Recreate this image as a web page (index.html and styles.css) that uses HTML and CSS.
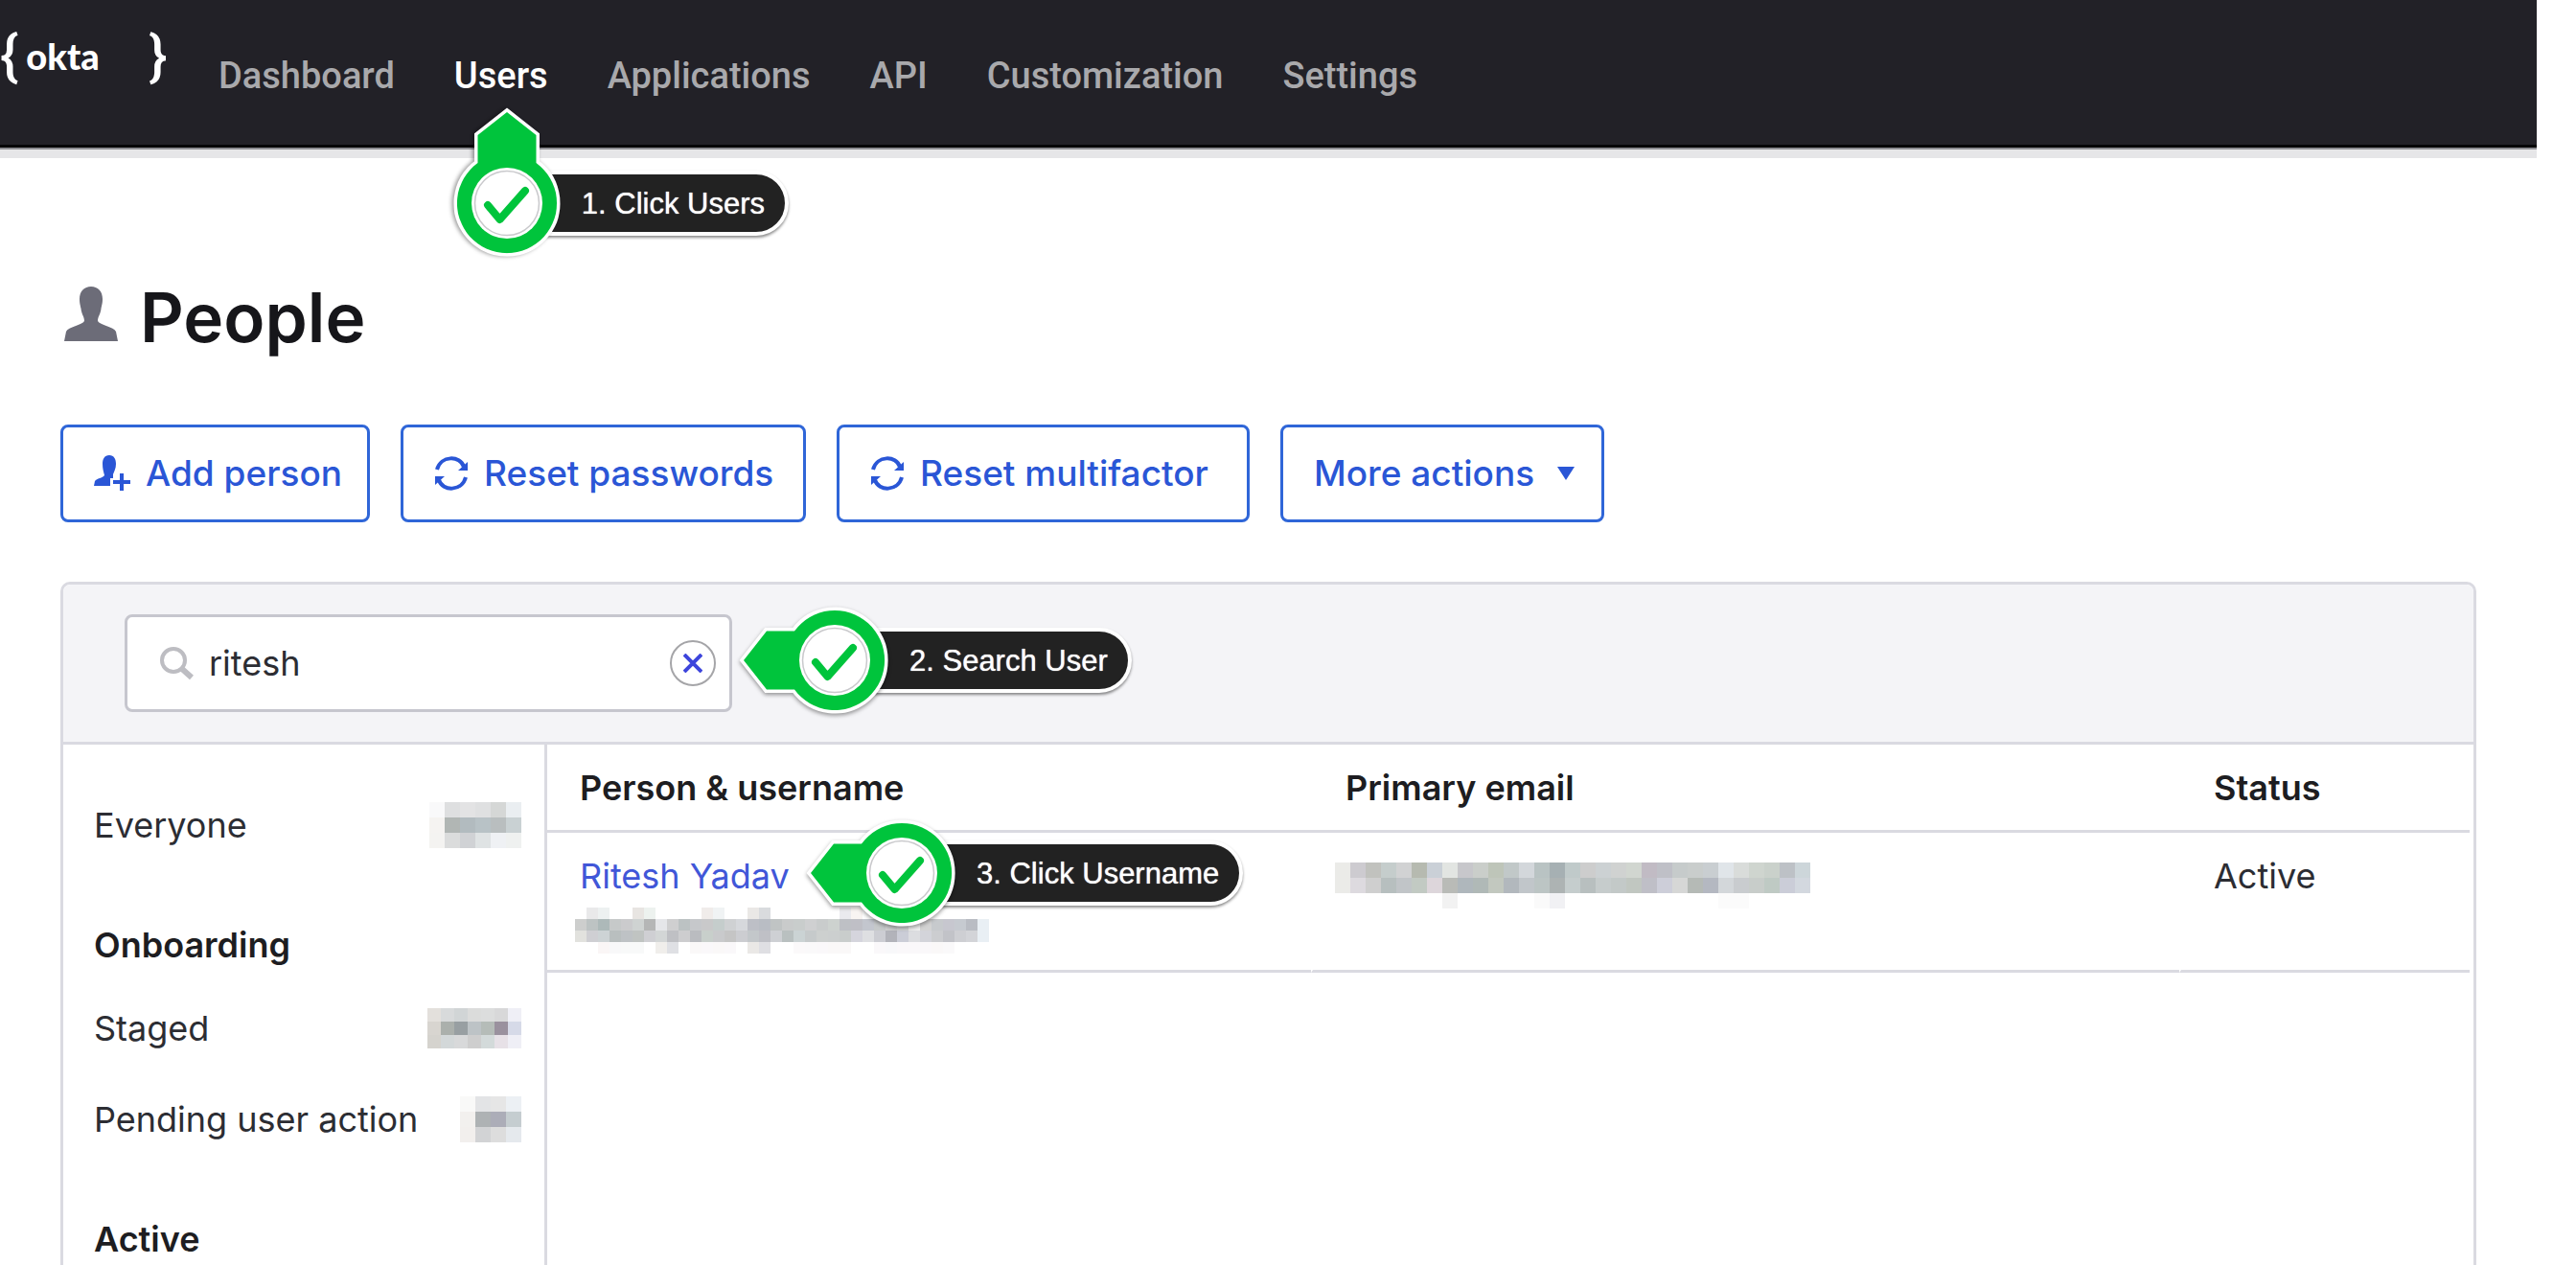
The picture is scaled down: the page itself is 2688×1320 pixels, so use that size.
FILE: index.html
```html
<!DOCTYPE html>
<html lang="en">
<head>
<meta charset="utf-8">
<meta name="viewport" content="width=device-width, initial-scale=1">
<title>People</title>
<link rel="stylesheet" href="styles.css">
</head>
<body>
<svg class="defs" aria-hidden="true">
  <symbol id="marker" viewBox="-104 -64 168 128">
    <path class="marker-edge" d="M-95 0 L-71 -30.500 H-42 A52 52 0 1 1 -42 30.500 H-71 Z"/>
    <path class="marker-fill" d="M-95 0 L-71 -30.500 H-42 A52 52 0 1 1 -42 30.500 H-71 Z"/>
  </symbol>
  <symbol id="dial" viewBox="-40 -40 80 80">
    <circle r="37" fill="#fff"/>
    <circle r="33.500" fill="#fff" stroke="#c9c9cc" stroke-width="1.500"/>
    <path d="M-20 2 L-7.500 17 L19 -13" fill="none" stroke="#00c43c" stroke-width="8" stroke-linecap="round" stroke-linejoin="round"/>
  </symbol>
  <symbol id="person" viewBox="0 0 56 57">
    <path d="M28 0 C35 0 40 5 40 13 C40 18 39 20 38.500 23 C38 29 35 31 35 36 C37 40 52 42 54 47 L56 57 H0 L2 47 C4 42 19 40 21 36 C21 31 18 29 17.500 23 C17 20 16 18 16 13 C16 5 21 0 28 0 Z"/>
  </symbol>
  <symbol id="cycle" viewBox="0 0 36 36">
    <path d="M3 14 C7 -1 27 -1 31 11" fill="none" stroke="currentColor" stroke-width="4"/>
    <path d="M35 6 V15 H25 Z"/>
    <path d="M33 22 C29 37 9 37 5 25" fill="none" stroke="currentColor" stroke-width="4"/>
    <path d="M1 30 V21 H11 Z"/>
  </symbol>
</svg>

<div class="page">
  <header class="topbar">
    <a class="logo" href="#" aria-label="okta home"><span class="brace">{</span><span class="wordmark">okta</span><span class="brace">}</span></a>
    <nav>
      <ul class="nav">
        <li><a href="#">Dashboard</a></li>
        <li class="current"><a href="#">Users</a>
          <div class="callout callout-up">
            <span class="callout-label">1. Click Users</span>
            <svg class="marker" aria-hidden="true"><use href="#marker"/></svg>
            <svg class="dial" aria-hidden="true"><use href="#dial"/></svg>
          </div>
        </li>
        <li><a href="#">Applications</a></li>
        <li><a href="#">API</a></li>
        <li><a href="#">Customization</a></li>
        <li><a href="#">Settings</a></li>
      </ul>
    </nav>
  </header>

  <main class="content">
    <h1 class="title"><svg class="title-icon" aria-hidden="true"><use href="#person"/></svg>People</h1>

    <div class="actions">
      <button type="button" class="btn">
        <svg class="icon-add" viewBox="0 0 38 38" aria-hidden="true"><path d="M16 0 C21 0 23 4 23 9 C23 14 21 17 20 20 V24 H17 V32 H0 L1 27 C3 24 9 24 11 21 C10 17 9 14 9 9 C9 4 11 0 16 0 Z"/><path d="M29 19 V37 M20 28 H38" fill="none" stroke="currentColor" stroke-width="4"/></svg>
        Add person
      </button>
      <button type="button" class="btn"><svg class="icon-cycle" aria-hidden="true"><use href="#cycle"/></svg>Reset passwords</button>
      <button type="button" class="btn"><svg class="icon-cycle" aria-hidden="true"><use href="#cycle"/></svg>Reset multifactor</button>
      <button type="button" class="btn btn-menu">More actions<svg class="icon-caret" viewBox="0 0 18 14" aria-hidden="true"><path d="M0 0 H18 L9 14 Z"/></svg></button>
    </div>

    <section class="panel">
      <div class="toolbar">
        <form class="search" role="search">
          <label for="q" class="search-icon" aria-label="Search people"><svg viewBox="0 0 36 36" aria-hidden="true"><circle cx="15" cy="15" r="12" fill="none" stroke="#bdbdc2" stroke-width="4"/><path d="M24 24 L34 33" stroke="#bdbdc2" stroke-width="6"/></svg></label>
          <input id="q" type="text" value="ritesh">
          <button type="button" class="clear" aria-label="Clear search"><svg viewBox="0 0 20 20" aria-hidden="true"><path d="M1 1 L19 19 M19 1 L1 19" fill="none" stroke="#3d45dc" stroke-width="4"/></svg></button>
          <div class="callout callout-search">
            <span class="callout-label">2. Search User</span>
            <svg class="marker" aria-hidden="true"><use href="#marker"/></svg>
            <svg class="dial" aria-hidden="true"><use href="#dial"/></svg>
          </div>
        </form>
      </div>

      <div class="body">
        <aside class="filters">
          <ul>
            <li><a href="#">Everyone</a><span class="mosaic" data-cell="16 16" data-rows="f9f9fa dedfe0 e3e3e4 dfe0e1 d5d7d6 eaeef1|f5f3f1 b1b6b4 b2bbbf b8c2c6 b9bebf c9d1d3|f4f3f1 dbdcdc d0d2d5 dfe3e4 eff1f4 eff1f0"></span></li>
          </ul>
          <h2>Onboarding</h2>
          <ul>
            <li><a href="#">Staged</a><span class="mosaic" data-cell="14 14" data-rows="e3e0dc d8dadb d1d5d6 dbdcdb dcdddd d8d8d9 efeff6|d8d5d0 abb0ac 989fa2 bdc3c6 b5bcb8 9a919e d6dae8|d5d3ce d3d8d9 d8d9da cecece d3dada e7e1e7 efeff6"></span></li>
            <li><a href="#">Pending user action</a><span class="mosaic" data-cell="16 16" data-rows="f9f9f8 e3e4e6 e6e6e6 ecf0f4|f2f0ee aeb2b4 acadb8 c5cdd0|f2efed d2d3d5 dddddd e5e9ed"></span></li>
          </ul>
          <h2>Active</h2>
        </aside>

        <div class="results">
          <table>
            <thead>
              <tr><th class="col-person" scope="col">Person &amp; username</th><th class="col-email" scope="col">Primary email</th><th class="col-status" scope="col">Status</th></tr>
            </thead>
            <tbody>
              <tr>
                <td>
                  <div class="person">
                    <a href="#">Ritesh Yadav</a>
                    <div class="callout callout-person">
                      <span class="callout-label">3. Click Username</span>
                      <svg class="marker" aria-hidden="true"><use href="#marker"/></svg>
                      <svg class="dial" aria-hidden="true"><use href="#dial"/></svg>
                    </div>
                  </div>
                  <span class="mosaic" data-cell="12 12" data-rows="- e9e9ea edf1f1 - - e8e5e2 edf2ef - - - - f0ecea f0f3f4 - - eae8e6 d9dbde - - - - - - eaeaee f8f4f2 - - - - - - - - - - -|cdcecd bdc3c3 adb9b9 c6c9c9 cbcbcd cfd3d2 b5b6b6 e5e6e9 cfcfd0 bcc2c3 c6c8cb c9c9ca c5cdcc cfd1d3 d6d8dc bdbfc6 b9bdc4 c0c4c4 c9cbcb c9cdcc cfd0d1 c9cccc cdd2cf bec0c5 bfbfc6 c3c6ce c6c9ca cfd0d1 d6d8d8 f0f0f0 d3d3d3 c7cacd c7c7cf c6cad0 b9bcc3 e9eff4|e2e2de cfcfd3 cdd3d5 b9bfbf bec2c5 c0c4c2 cfcfd3 d3d6d6 bfc0c4 cdcdcf babcc0 c8cfcb c9cacc c5c5c5 cccdd1 c3c7ca bfc0c6 ced0d4 b9c0c0 cbd3d4 c6cacb cdd0cf cccfcf c9cdcc d5d5dd dedfe2 cccdd3 b2b3ba cbcdd7 dcdde0 d3d4da cccdd0 c2c3c8 cecfd3 d3d4d8 e9eff4|- - faf6f6 f8f8f9 f8f9f9 f8f9f9 - f0eeeb dfe0e4 - faf8f8 faf8fa faf8f8 faf8fa - eae8e6 dfdfe3 - - fbf9fa faf9fa faf8fa faf8f8 faf8f8 - - faf8fa f8f8fa faf8fa faf8fa faf8fa faf8f8 faf9fa - - -"></span>
                </td>
                <td><span class="mosaic mosaic-email" data-cell="16 16" data-rows="ebebe8 cdcbd0 c1c2be c5cdcc d1d2d3 b6bab0 cad0d7 e2e5e2 c7c7cb caceca bec5b9 c1c8c8 d3d7db b9c3c3 a6b0b3 c0caca cdcdcd ccd1d3 d0d2d1 d1d6d0 c1bbc4 bfc0c7 c6cbcb c9cdcc c9ced1 e0e5e9 d9dcda cfd5cf cad1cb bdc1c6 cdd6da|ebebe8 dddadf cfcfcf b7bfbf c1c5c8 c2cac3 ddd6db b9bbb7 afb7bc b0b9b7 c2c8bf b2b8bd c1c6ca bcc5c4 adb3b3 c5cdcd b8bfbf c6cccc c3c9c8 c1c7c1 bfbfc7 cdced9 d6d7d6 b5bab6 b4b8c1 d3d7da c9cccf c8cdca bfcac4 cbcdd8 d3d8df|- - - - - - - f2f2f2 - - - - - fafafa f1f1f4 - - - - - - - - - - fbfbfb fbfbfb - - - -"></span></td>
                <td>Active</td>
              </tr>
            </tbody>
          </table>
        </div>
      </div>
    </section>
  </main>
</div>
<script src="mosaic.js"></script>
</body>
</html>
```

FILE: styles.css
```css
* { box-sizing: border-box; }

html { overflow: hidden; background: #fff; }

body {
  margin: 0;
  font: 400 36px/44px Inter, "Liberation Sans", sans-serif;
  color: #2c2d33;
}

a { color: inherit; text-decoration: none; }
ul { list-style: none; margin: 0; padding: 0; }
.defs { display: none; }

.page {
  margin-right: 41px;
  height: 100vh;
  display: flex;
  flex-direction: column;
}

/* Top bar */
.topbar {
  display: flex;
  align-items: flex-start;
  height: 154px;
  flex: none;
  background: #222127;
  border-bottom: 3px solid #050507;
  box-shadow: 0 2px 0 #8d8d92, 0 11px 0 #e6e6e8;
}

.logo {
  display: flex;
  align-items: center;
  width: 228px;
  padding-top: 28px;
  color: #fff;
}
.brace { font: 500 58px/60px Roboto, sans-serif; }
.wordmark {
  width: 136px;
  padding-left: 8px;
  font: 900 38px/60px Lato, sans-serif;
}

.nav {
  display: flex;
  gap: 62px;
  padding-top: 59px;
  font: 500 38px/40px Roboto, sans-serif;
  color: #a9a9ac;
}
.current { position: relative; color: #fff; }

/* Heading and actions */
.content {
  flex: 1;
  min-height: 0;
  display: flex;
  flex-direction: column;
  padding: 133px 63px 0;
}
.title {
  display: flex;
  align-items: center;
  gap: 23px;
  margin: 0 0 68px;
  padding-left: 4px;
  font-size: 71px;
  line-height: 88px;
  font-weight: 600;
  color: #16161a;
}
.title-icon { width: 56px; height: 57px; margin-bottom: 8px; fill: #6c6c78; }

.actions {
  display: grid;
  grid-template-columns: 323px 423px 431px 338px;
  gap: 32px;
  margin-bottom: 62px;
}
.btn {
  display: flex;
  align-items: center;
  gap: 16px;
  height: 102px;
  padding: 0 32px;
  border: 3px solid #2f66d8;
  border-radius: 8px;
  background: #fff;
  color: #2a56d6;
  fill: currentColor;
  font: 500 37px/44px Inter, sans-serif;
  white-space: nowrap;
}
.btn-menu { justify-content: space-between; padding-right: 28px; }
.icon-add { flex: none; width: 38px; height: 38px; }
.icon-cycle { flex: none; width: 36px; height: 36px; }
.icon-caret { flex: none; width: 18px; height: 14px; }

/* Panel */
.panel {
  flex: 1;
  min-height: 0;
  display: flex;
  flex-direction: column;
  border: 3px solid #dadae1;
  border-bottom: 0;
  border-radius: 10px 10px 0 0;
}
.toolbar {
  padding: 31px 64px;
  background: #f4f4f7;
  border-bottom: 3px solid #dadae1;
  border-radius: 8px 8px 0 0;
}
.search {
  position: relative;
  display: flex;
  align-items: center;
  width: 634px;
  height: 102px;
  padding: 0 14px 0 33px;
  border: 3px solid #c6c6ce;
  border-radius: 8px;
  background: #fff;
}
.search-icon { width: 36px; height: 36px; margin-right: 16px; }
.search-icon svg { display: block; }
.search input {
  flex: 1;
  min-width: 0;
  padding: 0;
  border: 0;
  outline: 0;
  font: inherit;
  color: #2c2d33;
}
.clear {
  display: flex;
  align-items: center;
  justify-content: center;
  width: 48px;
  height: 48px;
  padding: 0;
  border: 2px solid #a5a5a8;
  border-radius: 50%;
  background: #fff;
}
.clear svg { width: 20px; height: 20px; }

.body { flex: 1; min-height: 0; display: flex; }
.filters {
  flex: none;
  width: 505px;
  padding: 36px 24px 0 32px;
  border-right: 3px solid #dadae1;
}
.filters li {
  display: flex;
  align-items: center;
  justify-content: space-between;
  height: 95px;
}
.filters h2 {
  margin: 39px 0 0;
  font-size: 36px;
  line-height: 78px;
  font-weight: 600;
  color: #1d1d21;
}

.results { flex: 1; padding-right: 4px; }
table { width: 100%; border-collapse: separate; border-spacing: 0; table-layout: fixed; }
th, td { padding: 0 0 0 34px; text-align: left; vertical-align: top; }
th {
  height: 92px;
  padding-top: 23px;
  border-bottom: 3px solid #dadae1;
  font-weight: 600;
  color: #1d1d21;
}
td { height: 146px; padding-top: 23px; border-bottom: 3px solid #dadae1; }
td + td { border-left: 2px solid #fff; }
.col-person { width: 797px; }
.col-email { padding-left: 36px; }
.col-status { width: 303px; padding-left: 36px; }
.person { position: relative; color: #4157d8; }

/* Pixelated blocks over private values */
.mosaic { display: block; width: max-content; }
.mosaic-row { display: flex; }
td .mosaic { margin-top: 11px; margin-left: -5px; }
td .mosaic-email { margin-top: 8px; margin-left: -11px; }

/* Step callouts: the element's left edge is the centre of the dial */
.callout { position: absolute; z-index: 2; height: 68px; }
.callout-label {
  display: block;
  padding: 2px 21px 0 74px;
  border: 4px solid #fff;
  border-radius: 34px;
  background: #222;
  box-shadow: 0 2px 3px rgba(0, 0, 0, 0.45);
  font: 400 31px/58px "Liberation Sans", Arial, sans-serif;
  color: #fff;
  text-shadow: 0 0 1px #fff;
  white-space: nowrap;
}
.marker {
  position: absolute;
  left: -104px;
  top: -30px;
  width: 168px;
  height: 128px;
  filter: drop-shadow(0 2px 2px rgba(0, 0, 0, 0.4));
}
.marker-edge { fill: #fff; stroke: #fff; stroke-width: 7; }
.marker-fill { fill: #00c43c; }
.dial { position: absolute; left: -40px; top: -6px; width: 80px; height: 80px; }
.callout-up { left: 55px; top: 119px; }
.callout-up .marker { transform: rotate(90deg); transform-origin: 104px 64px; }
.callout-search { left: 738px; top: 11px; }
.callout-person { left: 336px; top: -15px; }
```

FILE: mosaic.js
```js
// Builds each pixelated block from its rows of cell colours; "-" is an empty cell.
document.querySelectorAll('.mosaic').forEach(function (block) {
  var size = block.dataset.cell.split(' ');
  block.dataset.rows.split('|').forEach(function (line) {
    var row = document.createElement('span');
    row.className = 'mosaic-row';
    line.trim().split(/\s+/).forEach(function (colour) {
      var cell = document.createElement('span');
      cell.style.width = size[0] + 'px';
      cell.style.height = size[1] + 'px';
      if (colour !== '-') cell.style.background = '#' + colour;
      row.appendChild(cell);
    });
    block.appendChild(row);
  });
});
```
